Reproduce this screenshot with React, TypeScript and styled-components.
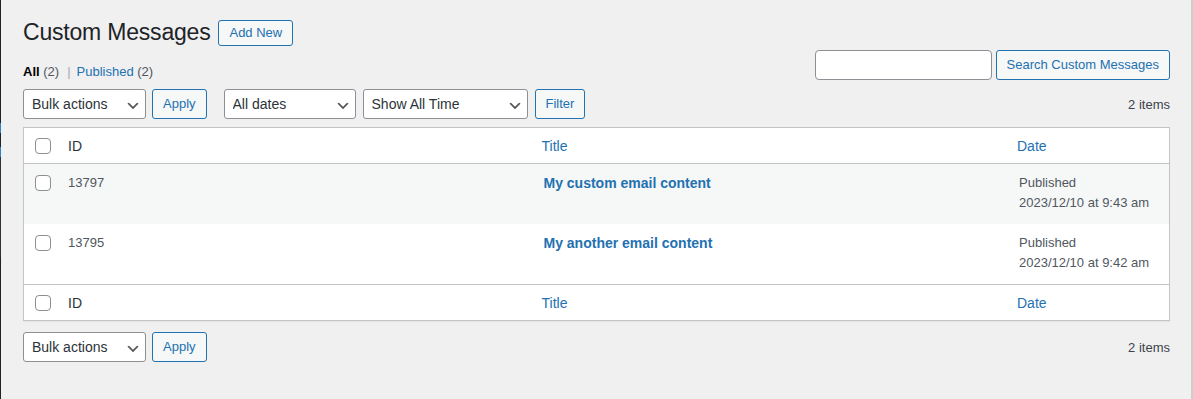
import React from "react";
import styled, { createGlobalStyle } from "styled-components";

const COLORS = {
  bg: "#f0f0f1",
  heading: "#1d2327",
  text: "#2c3338",
  muted: "#50575e",
  link: "#2271b1",
  border: "#c3c4c7",
  input: "#8c8f94",
  stripe: "#f6f7f7",
  menu: "#1d2327",
  submenu: "#2c3338",
  current: "#2e81c4",
};

const FONT = `"Segoe UI", "Liberation Sans", Arial, sans-serif`;

const GlobalStyle = createGlobalStyle`
  html, body {
    margin: 0;
    padding: 0;
    background: ${COLORS.bg};
  }
  body {
    font-family: ${FONT};
    font-size: 13px;
    color: #3c434a;
  }
  * {
    box-sizing: border-box;
  }
`;

const Page = styled.div`
  display: flex;
  height: 399px;
  overflow: hidden;
`;

const MenuEdge = styled.div`
  width: 1px;
  flex-shrink: 0;
  display: flex;
  flex-direction: column;
`;

const EdgeSegment = styled.div<{ $color: string; $height?: number }>`
  background: ${({ $color }) => $color};
  ${({ $height }) => ($height ? `height: ${$height}px;` : `flex: 1;`)}
`;

const ScrollEdge = styled.div`
  width: 2px;
  flex-shrink: 0;
  background: #cdcdcd;
`;

const Main = styled.main`
  flex: 1;
  min-width: 0;
  padding: 10px 21px 0 22px;
`;

const Header = styled.div`
  display: flex;
  align-items: flex-start;
  gap: 8px;
`;

const Title = styled.h1`
  margin: 0;
  padding: 8px 0 3px;
  font-size: 23px;
  font-weight: 400;
  line-height: 29px;
  letter-spacing: -0.2px;
  color: ${COLORS.heading};
`;

const OutlineButton = styled.button<{ $small?: boolean }>`
  font-family: inherit;
  font-size: 13px;
  color: ${COLORS.link};
  background: ${COLORS.stripe};
  border: 1px solid ${COLORS.link};
  border-radius: 3px;
  height: ${({ $small }) => ($small ? 26 : 30)}px;
  line-height: ${({ $small }) => ($small ? 24 : 28)}px;
  padding: 0 10px;
  white-space: nowrap;
  cursor: pointer;
  ${({ $small }) => $small && `margin-top: 10px;`}
`;

const FilterRow = styled.div`
  display: flex;
  justify-content: space-between;
  align-items: flex-start;
  height: 39px;
`;

const Views = styled.ul`
  list-style: none;
  margin: 0;
  padding: 9px 0 0;
  display: flex;
  font-size: 13px;
  line-height: 26px;
  color: ${COLORS.muted};
`;

const ViewItem = styled.li`
  white-space: pre;
`;

const ViewLink = styled.a<{ $current?: boolean }>`
  text-decoration: none;
  color: ${({ $current }) => ($current ? "#000" : COLORS.link)};
  font-weight: ${({ $current }) => ($current ? 600 : 400)};
`;

const Separator = styled.span`
  color: #a7aaad;
  padding: 0 6px 0 8px;
`;

const SearchBox = styled.form`
  display: flex;
  gap: 4px;
  margin: 0;
`;

const SearchInput = styled.input`
  width: 177px;
  height: 30px;
  border: 1px solid ${COLORS.input};
  border-radius: 4px;
  background: #fff;
  font-family: inherit;
  font-size: 14px;
  padding: 0 8px;
`;

const TableNav = styled.div<{ $bottom?: boolean }>`
  display: flex;
  align-items: center;
  height: 30px;
  margin-top: ${({ $bottom }) => ($bottom ? 11 : 0)}px;
`;

const ActionGroup = styled.div<{ $gap: number; $offset?: number }>`
  display: flex;
  align-items: center;
  gap: ${({ $gap }) => $gap}px;
  margin-left: ${({ $offset }) => $offset ?? 0}px;
`;

const ItemCount = styled.span`
  margin-left: auto;
  font-size: 13px;
  color: #3c434a;
`;

const SelectWrap = styled.div<{ $width: number }>`
  position: relative;
  width: ${({ $width }) => $width}px;
  height: 30px;
`;

const NativeSelect = styled.select`
  appearance: none;
  width: 100%;
  height: 100%;
  border: 1px solid ${COLORS.input};
  border-radius: 3px;
  background: #fff;
  font-family: inherit;
  font-size: 14px;
  color: ${COLORS.text};
  padding: 0 24px 0 8px;
  cursor: pointer;
`;

const Chevron = styled.svg`
  position: absolute;
  right: 5px;
  top: 55%;
  transform: translateY(-50%);
  width: 16px;
  height: 16px;
  pointer-events: none;
`;

const Select = ({ width, label }: { width: number; label: string }) => (
  <SelectWrap $width={width}>
    <NativeSelect defaultValue={label}>
      <option>{label}</option>
    </NativeSelect>
    <Chevron viewBox="0 0 20 20">
      <path d="M5 6l5 5 5-5 2 1-7 7-7-7 2-1z" fill="#555" />
    </Chevron>
  </SelectWrap>
);

const ListTable = styled.table`
  width: 100%;
  margin-top: 8px;
  border: 1px solid ${COLORS.border};
  border-spacing: 0;
  background: #fff;
  table-layout: fixed;
  box-shadow: 0 1px 1px rgba(0, 0, 0, 0.04);
`;

const Col = styled.col<{ $width?: number }>`
  ${({ $width }) => $width && `width: ${$width}px;`}
`;

const HeadCell = styled.th<{ $sortable?: boolean; $foot?: boolean; $check?: boolean }>`
  text-align: left;
  font-weight: 400;
  font-size: 14px;
  line-height: 19px;
  vertical-align: middle;
  padding: ${({ $sortable, $check }) =>
    $check ? "0 0 0 11px" : $sortable ? "9px 8px 7px" : "9px 10px 7px"};
  color: ${({ $sortable }) => ($sortable ? COLORS.link : COLORS.text)};
  ${({ $foot }) =>
    $foot
      ? `border-top: 1px solid ${COLORS.border};`
      : `border-bottom: 1px solid ${COLORS.border};`}
`;

const Row = styled.tr<{ $striped?: boolean }>`
  height: 60px;
  background: ${({ $striped }) => ($striped ? COLORS.stripe : "#fff")};
`;

const Cell = styled.td<{ $check?: boolean }>`
  vertical-align: top;
  font-size: 13px;
  line-height: 20px;
  color: ${COLORS.muted};
  padding: ${({ $check }) => ($check ? "11px 0 0 11px" : "9px 10px 7px")};
`;

const RowTitle = styled.a`
  font-size: 14px;
  font-weight: 600;
  color: ${COLORS.link};
  text-decoration: none;
`;

const Checkbox = styled.input.attrs({ type: "checkbox" })`
  appearance: none;
  display: block;
  width: 16px;
  height: 16px;
  margin: 0;
  border: 1px solid ${COLORS.input};
  border-radius: 4px;
  background: #fff;
  cursor: pointer;
`;

const messages = [
  { id: 13797, title: "My custom email content", date: "2023/12/10 at 9:43 am" },
  { id: 13795, title: "My another email content", date: "2023/12/10 at 9:42 am" },
];

const edge = [
  { color: COLORS.menu, height: 123 },
  { color: COLORS.current, height: 10 },
  { color: COLORS.menu, height: 14 },
  { color: COLORS.current, height: 10 },
  { color: COLORS.submenu, height: 100 },
  { color: COLORS.menu },
];

const ColumnHeads = ({ foot }: { foot?: boolean }) => (
  <tr>
    <HeadCell $check $foot={foot}>
      <Checkbox />
    </HeadCell>
    <HeadCell $foot={foot}>ID</HeadCell>
    <HeadCell $sortable $foot={foot}>Title</HeadCell>
    <HeadCell $sortable $foot={foot}>Date</HeadCell>
  </tr>
);

export default function App() {
  return (
    <>
      <GlobalStyle />
      <Page>
        <MenuEdge>
          {edge.map((s, i) => (
            <EdgeSegment key={i} $color={s.color} $height={s.height} />
          ))}
        </MenuEdge>
        <Main>
          <Header>
            <Title>Custom Messages</Title>
            <OutlineButton $small>Add New</OutlineButton>
          </Header>

          <FilterRow>
            <Views>
              <ViewItem>
                <ViewLink $current>All</ViewLink> (2)
              </ViewItem>
              <Separator>|</Separator>
              <ViewItem>
                <ViewLink>Published</ViewLink> (2)
              </ViewItem>
            </Views>
            <SearchBox onSubmit={(e) => e.preventDefault()}>
              <SearchInput type="search" />
              <OutlineButton type="submit">Search Custom Messages</OutlineButton>
            </SearchBox>
          </FilterRow>

          <TableNav>
            <ActionGroup $gap={6}>
              <Select width={123} label="Bulk actions" />
              <OutlineButton>Apply</OutlineButton>
            </ActionGroup>
            <ActionGroup $gap={7} $offset={17}>
              <Select width={132} label="All dates" />
              <Select width={165} label="Show All Time" />
              <OutlineButton>Filter</OutlineButton>
            </ActionGroup>
            <ItemCount>2 items</ItemCount>
          </TableNav>

          <ListTable>
            <colgroup>
              <Col $width={34} />
              <Col />
              <Col />
              <Col $width={160} />
            </colgroup>
            <thead>
              <ColumnHeads />
            </thead>
            <tbody>
              {messages.map((m, i) => (
                <Row key={m.id} $striped={i % 2 === 0}>
                  <Cell $check>
                    <Checkbox />
                  </Cell>
                  <Cell>{m.id}</Cell>
                  <Cell>
                    <RowTitle>{m.title}</RowTitle>
                  </Cell>
                  <Cell>
                    Published
                    <br />
                    {m.date}
                  </Cell>
                </Row>
              ))}
            </tbody>
            <tfoot>
              <ColumnHeads foot />
            </tfoot>
          </ListTable>

          <TableNav $bottom>
            <ActionGroup $gap={6}>
              <Select width={123} label="Bulk actions" />
              <OutlineButton>Apply</OutlineButton>
            </ActionGroup>
            <ItemCount>2 items</ItemCount>
          </TableNav>
        </Main>
        <ScrollEdge />
      </Page>
    </>
  );
}
